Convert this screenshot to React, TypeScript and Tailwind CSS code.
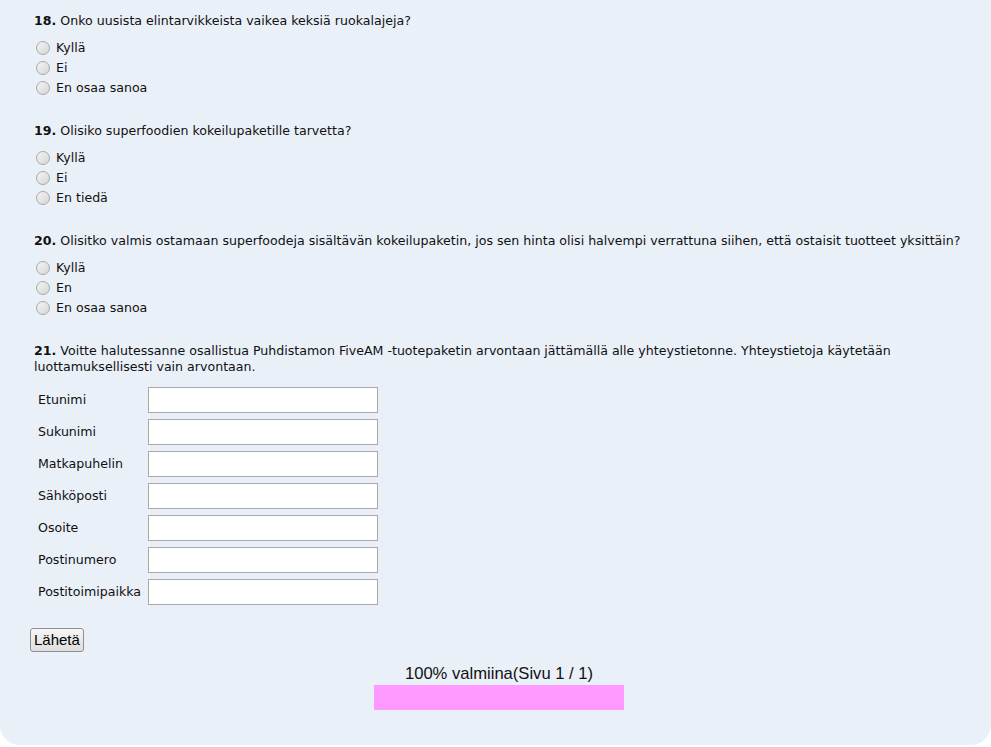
import React from "react";

type Question = {
  num: number;
  text: string;
  options: string[];
};

const questions: Question[] = [
  {
    num: 18,
    text: "Onko uusista elintarvikkeista vaikea keksiä ruokalajeja?",
    options: ["Kyllä", "Ei", "En osaa sanoa"],
  },
  {
    num: 19,
    text: "Olisiko superfoodien kokeilupaketille tarvetta?",
    options: ["Kyllä", "Ei", "En tiedä"],
  },
  {
    num: 20,
    text: "Olisitko valmis ostamaan superfoodeja sisältävän kokeilupaketin, jos sen hinta olisi halvempi verrattuna siihen, että ostaisit tuotteet yksittäin?",
    options: ["Kyllä", "En", "En osaa sanoa"],
  },
];

const fields = [
  "Etunimi",
  "Sukunimi",
  "Matkapuhelin",
  "Sähköposti",
  "Osoite",
  "Postinumero",
  "Postitoimipaikka",
];

function Radio({ label }: { label: string }) {
  return (
    <label className="flex h-[20px] items-center">
      <span className="ml-[2px] mr-[6px] h-[14px] w-[14px] rounded-full border border-[#a8a8a8] bg-gradient-to-br from-[#f4f4f4] to-[#d6d6d6]" />
      <span>{label}</span>
    </label>
  );
}

export default function App() {
  return (
    <div className="min-h-screen bg-white">
      <div
        className="h-[745px] rounded-b-[20px] bg-[#eaf0f8] pl-[30px] pr-[20px] pt-[13px] text-[12.6px] leading-[16px] text-[#111]"
        style={{ fontFamily: "Verdana, 'DejaVu Sans', sans-serif" }}
      >
        {questions.map((q) => (
          <div key={q.num} className="mb-[25px] pl-[4px]">
            <p className="whitespace-nowrap">
              <b>{q.num}.</b> {q.text}
            </p>
            <div className="mt-[9px] flex flex-col">
              {q.options.map((o) => (
                <Radio key={o} label={o} />
              ))}
            </div>
          </div>
        ))}

        <div className="pl-[4px]">
          <p className="max-w-[880px]">
            <b>21.</b> Voitte halutessanne osallistua Puhdistamon FiveAM -tuotepaketin arvontaan jättämällä alle yhteystietonne. Yhteystietoja käytetään luottamuksellisesti vain arvontaan.
          </p>
          <div className="mt-[9px] flex flex-col">
            {fields.map((f) => (
              <div key={f} className="flex h-[32px] items-center">
                <span className="w-[114px] pl-[4px]">{f}</span>
                <input
                  type="text"
                  className="h-[26px] w-[230px] border border-[#a9a9a9] bg-white"
                />
              </div>
            ))}
          </div>
        </div>

        <div className="mt-[20px]" style={{ fontFamily: "Arial, 'Liberation Sans', sans-serif" }}>
          <button className="h-[24px] rounded-[3px] border border-[#8f8f8f] bg-gradient-to-b from-[#f6f6f6] to-[#dedede] px-[3px] text-[15px] leading-[18px] text-black">
            Lähetä
          </button>
          <div className="mt-[13px] flex flex-col items-center pr-[3px]">
            <p className="text-[16.6px] leading-[18px] text-[#111]">100% valmiina(Sivu 1 / 1)</p>
            <div className="mt-[2px] h-[25px] w-[250px] bg-[#ff99ff]" />
          </div>
        </div>
      </div>
    </div>
  );
}
